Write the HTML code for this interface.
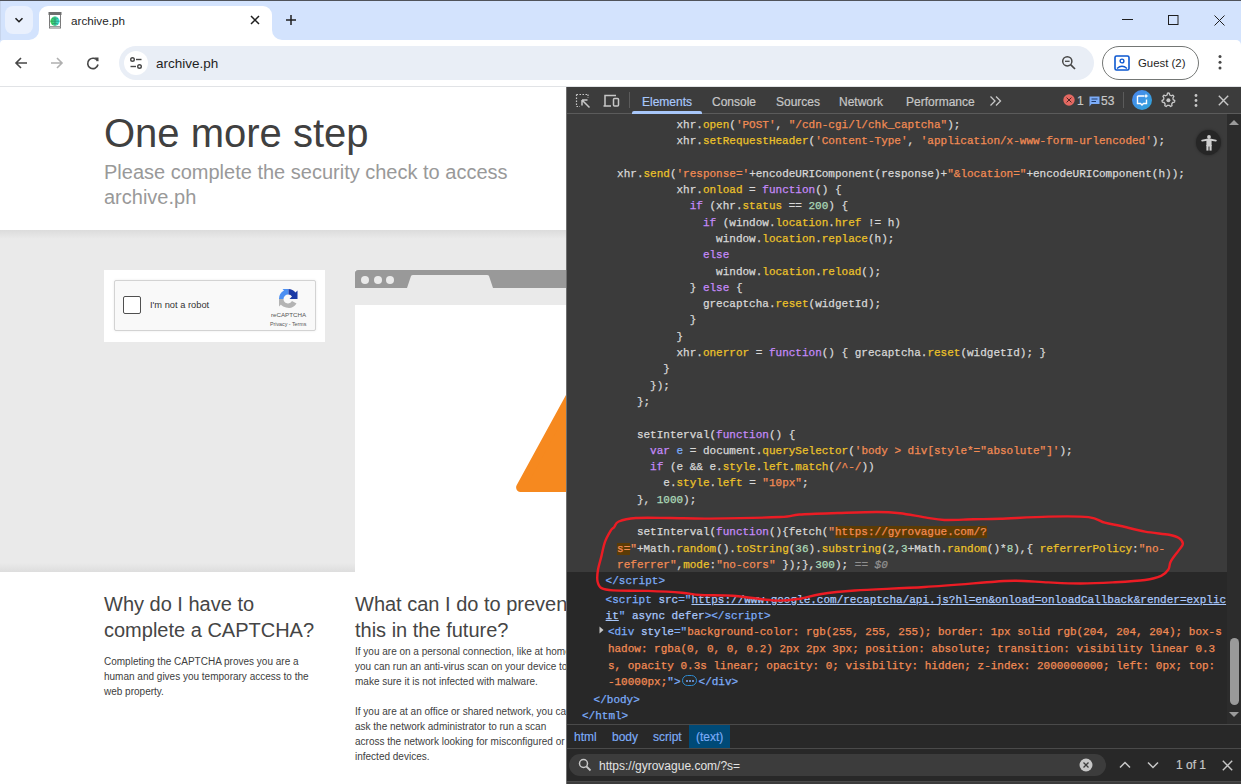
<!DOCTYPE html>
<html><head><meta charset="utf-8">
<style>
*{margin:0;padding:0;box-sizing:border-box}
html,body{width:1241px;height:784px;overflow:hidden;background:#fff;font-family:"Liberation Sans",sans-serif}
.abs{position:absolute}
/* ---------- browser chrome ---------- */
#topline{position:absolute;left:0;top:0;width:1241px;height:1px;background:#50535a}
#strip{position:absolute;left:0;top:1px;width:1241px;height:47px;background:#d3e3fd}
#ddbtn{position:absolute;left:5px;top:6px;width:28px;height:28px;border-radius:8px;background:#e9f0fd}
#tab{position:absolute;left:39px;top:6px;width:233px;height:34px;background:#fff;border-radius:9px 9px 0 0}
.flare{position:absolute;top:30px;width:10px;height:10px;background:#fff}
.flare:after{content:"";position:absolute;top:0;width:10px;height:10px;background:#d3e3fd}
#flL{left:29px}#flL:after{left:0;border-bottom-right-radius:10px}
#flR{left:272px}#flR:after{left:0;border-bottom-left-radius:10px}
#tabtitle{position:absolute;left:71px;top:14px;font-size:11.7px;color:#1f1f1f;line-height:14px}
#toolbar{position:absolute;left:0;top:40px;width:1241px;height:46px;background:#fff;border-radius:4px 5px 0 0}
#stripedge{position:absolute;left:0;top:1px;width:1px;height:39px;background:#c6d4ec}
#tbline{position:absolute;left:0;top:86px;width:1241px;height:1px;background:#e1e3e6}
#omni{position:absolute;left:119px;top:46px;width:975px;height:34px;border-radius:17px;background:#e9eef6}
#sitebtn{position:absolute;left:124px;top:51px;width:24px;height:24px;border-radius:12px;background:#fff}
#omnitext{position:absolute;left:156px;top:56px;font-size:13.5px;color:#1f1f1f;line-height:16px}
#guest{position:absolute;left:1102px;top:46px;width:97px;height:34px;border-radius:17px;border:1px solid #747775;background:#fff}
#guesttext{position:absolute;left:1138px;top:56px;font-size:11.4px;color:#1f1f1f;line-height:14px}
/* ---------- page ---------- */
#page{position:absolute;left:0;top:87px;width:566px;height:697px;background:#fff;overflow:hidden}
#h1{position:absolute;left:104px;top:23px;font-size:40px;line-height:46px;color:#404040;white-space:nowrap}
#h2{position:absolute;left:104px;top:73px;font-size:20px;line-height:25px;color:#999;width:420px}
#band{position:absolute;left:0;top:143px;width:566px;height:342px;background:linear-gradient(to bottom,#dcdcdc 0px,#eaeaea 9px,#eaeaea 333px,#dddddd 342px)}
#capbox{position:absolute;left:104px;top:183px;width:221px;height:72px;background:#fff}
#capw{position:absolute;left:114px;top:193px;width:202px;height:51px;background:#f9f9f9;border:1px solid #d3d3d3;border-radius:2px;box-shadow:0 0 3px rgba(0,0,0,.08)}
#cb{position:absolute;left:123px;top:209px;width:18px;height:18px;border:1.6px solid #505050;border-radius:2px;background:#fff}
#robot{position:absolute;left:150px;top:213.3px;font-size:9.3px;color:#333;line-height:11px;white-space:nowrap}
#rctext{position:absolute;left:271px;top:223.5px;font-size:6.2px;color:#555;line-height:7px}
#rcpriv{position:absolute;left:270px;top:234px;font-size:5.3px;color:#555;line-height:6px;white-space:nowrap}
#bmock{position:absolute;left:355px;top:182.5px;width:260px;height:302.5px;background:#fff}
#bmbar{position:absolute;left:0;top:0;width:260px;height:18.5px;background:#999;border-radius:3px 0 0 0}
#bmtool{position:absolute;left:0;top:18.5px;width:260px;height:17px;background:#eaeaea}
.dot{position:absolute;top:6.3px;width:8px;height:8px;border-radius:4px;background:#eaeaea}
#h3a{position:absolute;left:104px;top:505px;font-size:20px;line-height:25.6px;color:#454545;width:240px}
#h3b{position:absolute;left:355px;top:505px;font-size:20px;line-height:25.6px;color:#454545;white-space:nowrap}
.para{position:absolute;font-size:10px;line-height:15px;color:#404040;white-space:nowrap}
/* ---------- devtools ---------- */
#dt{position:absolute;left:566px;top:87px;width:675px;height:697px;background:#282828;overflow:hidden}
#dtleft{position:absolute;left:0;top:0;width:1px;height:697px;background:#6f6f6f}
#dttb{position:absolute;left:1px;top:0;width:674px;height:26px;background:#3c3c3c}
#dttbline{position:absolute;left:1px;top:26px;width:674px;height:1px;background:#5b5b5b}
.dtab{position:absolute;top:7.5px;font-size:12px;line-height:14px;color:#c7c7c7;white-space:nowrap;-webkit-text-stroke:0.2px currentColor}
#sel{position:absolute;left:1px;top:27px;width:660px;height:458px;background:#3b3b3b}
#sbtrack{position:absolute;left:661px;top:27px;width:14px;height:610px;background:#2c2c2c}
#sbthumb{position:absolute;left:664px;top:551px;width:9px;height:67px;border-radius:5px;background:#9a9a9a}
.ln{position:absolute;font-family:"Liberation Mono",monospace;font-size:11px;line-height:16px;height:16px;white-space:pre;color:#e3e3e3;-webkit-text-stroke:0.25px currentColor}
#code{position:absolute;left:-566px;top:-87px;width:1241px;height:784px}
.d{color:#d8d8d8}.k{color:#c58af9}.p{color:#ecc22a}.s{color:#f28b54}.n{color:#acdab9}.v{color:#7cacf8}
.g{color:#8f8f8f;font-style:italic}
.hs{color:#f28b54;background:#5b3b05}
.t{color:#7cacf8}.a{color:#a8c7fa}.av{color:#f28b54}.lk{color:#a8c7fa;text-decoration:underline}
.ell{display:inline-block;vertical-align:middle;width:15px;height:11px;border:1px solid #2f8bcf;border-radius:6px;margin:0 2px 2px 1px;position:relative}
.ell i{position:absolute;top:4px;width:2px;height:2px;background:#7cacf8;border-radius:1px}
.ell i:nth-child(1){left:3px}.ell i:nth-child(2){left:6px}.ell i:nth-child(3){left:9px}
#bcline{position:absolute;left:1px;top:637px;width:674px;height:1px;background:#4a4a4a}
#bcline2{position:absolute;left:1px;top:661px;width:674px;height:1px;background:#4a4a4a}
#bctext{position:absolute;left:123px;top:638px;width:41px;height:23px;background:#004a77}
.bc{position:absolute;top:643px;font-size:12px;line-height:14px;color:#7cacf8;white-space:nowrap;-webkit-text-stroke:0.15px currentColor}
#search{position:absolute;left:3px;top:667px;width:537px;height:22px;border-radius:11px;background:#3c3c3c}
#stext{position:absolute;left:33px;top:672px;font-size:12px;line-height:14px;color:#e3e3e3;white-space:nowrap}
#bline3{position:absolute;left:1px;top:694px;width:674px;height:1px;background:#4a4a4a}
#bot{position:absolute;left:1px;top:695px;width:674px;height:2px;background:#3c3c3c}
#a11y{position:absolute;left:630.3px;top:43.3px;width:25.2px;height:25.2px;border-radius:13px;background:#262626;box-shadow:0 0 3px rgba(0,0,0,.35)}
</style></head>
<body>
<div id="topline"></div>
<div id="strip"></div>
<div id="stripedge"></div>
<div id="tab"></div>
<div class="flare" id="flL"></div><div class="flare" id="flR"></div>
<div id="ddbtn"></div>
<svg class="abs" style="left:13px;top:14px" width="12" height="12" viewBox="0 0 12 12"><path d="M2.5 4.2 L6 7.7 L9.5 4.2" fill="none" stroke="#1f1f1f" stroke-width="1.6"/></svg>

<svg class="abs" style="left:47px;top:11px" width="16" height="18" viewBox="0 0 16 18">
<defs><linearGradient id="gl" x1="0" x2="1" y1="0" y2="0"><stop offset="0" stop-color="#3ad04a"/><stop offset="1" stop-color="#3ee0e8"/></linearGradient></defs>
<rect x="2.5" y="3" width="11" height="14" fill="#fff" stroke="#7a7a7a" stroke-width="1"/>
<rect x="1.5" y="1" width="13" height="3" fill="#6e6e6e"/>
<circle cx="8" cy="10.2" r="4.6" fill="url(#gl)"/>
<path d="M3.6 10.2 H12.4 M8 5.6 V14.8 M5 7.5 Q8 9 11 7.5 M5 13 Q8 11.4 11 13" fill="none" stroke="#2a7a60" stroke-width=".6"/>
<path d="M2.5 15.5 H13.5" stroke="#9a9a9a" stroke-width="1"/>
</svg>
<div id="tabtitle">archive.ph</div>
<svg class="abs" style="left:250px;top:15px" width="10" height="10" viewBox="0 0 10 10"><path d="M1 1 L9 9 M9 1 L1 9" stroke="#1f1f1f" stroke-width="1.5"/></svg>
<svg class="abs" style="left:285px;top:14px" width="12" height="12" viewBox="0 0 12 12"><path d="M6 1 V11 M1 6 H11" stroke="#1f1f1f" stroke-width="1.5"/></svg>
<svg class="abs" style="left:1122px;top:15px" width="11" height="10" viewBox="0 0 11 10"><path d="M0 4.5 H11" stroke="#1f1f1f" stroke-width="1"/></svg>
<svg class="abs" style="left:1168px;top:15px" width="11" height="10" viewBox="0 0 11 10"><rect x=".5" y=".5" width="9.5" height="9" fill="none" stroke="#1f1f1f" stroke-width="1"/></svg>
<svg class="abs" style="left:1214px;top:15px" width="11" height="11" viewBox="0 0 11 11"><path d="M.5 .5 L10.5 10.5 M10.5 .5 L.5 10.5" stroke="#1f1f1f" stroke-width="1"/></svg>

<div id="toolbar"></div>
<div id="tbline"></div>
<svg class="abs" style="left:13px;top:55px" width="16" height="16" viewBox="0 0 16 16"><path d="M14 8 H3 M8 3 L3 8 L8 13" fill="none" stroke="#474747" stroke-width="1.6"/></svg>
<svg class="abs" style="left:49px;top:55px" width="16" height="16" viewBox="0 0 16 16"><path d="M2 8 H13 M8 3 L13 8 L8 13" fill="none" stroke="#b0b0b0" stroke-width="1.6"/></svg>
<svg class="abs" style="left:85px;top:55px" width="16" height="16" viewBox="0 0 16 16"><path d="M12.6 6.2 A5.2 5.2 0 1 0 13 9.5" fill="none" stroke="#474747" stroke-width="1.6"/><path d="M9.5 2.5 H13.5 V6.5 Z" fill="#474747"/></svg>
<div id="omni"></div>
<div id="sitebtn"></div>
<svg class="abs" style="left:128px;top:55px" width="16" height="16" viewBox="0 0 16 16"><circle cx="4.5" cy="4.5" r="1.8" fill="none" stroke="#474747" stroke-width="1.4"/><path d="M8 4.5 H13.5" stroke="#474747" stroke-width="1.4"/><circle cx="11.5" cy="11.5" r="1.8" fill="none" stroke="#474747" stroke-width="1.4"/><path d="M2.5 11.5 H8" stroke="#474747" stroke-width="1.4"/></svg>
<div id="omnitext">archive.ph</div>
<svg class="abs" style="left:1061px;top:55px" width="16" height="16" viewBox="0 0 16 16"><circle cx="6.3" cy="6.3" r="4.6" fill="none" stroke="#474747" stroke-width="1.5"/><path d="M9.6 9.6 L14 14" stroke="#474747" stroke-width="1.7"/><path d="M4 6.3 H8.6" stroke="#474747" stroke-width="1.3"/></svg>
<div id="guest"></div>
<svg class="abs" style="left:1114px;top:55px" width="16" height="16" viewBox="0 0 16 16"><rect x="1" y="1" width="14" height="14" rx="1.5" fill="none" stroke="#0b57d0" stroke-width="1.6"/><circle cx="8" cy="6" r="1.9" fill="none" stroke="#0b57d0" stroke-width="1.4"/><path d="M3 13.5 Q8 9 13 13.5" fill="none" stroke="#0b57d0" stroke-width="1.4"/></svg>
<div id="guesttext">Guest (2)</div>
<svg class="abs" style="left:1216px;top:54.4px" width="8" height="18" viewBox="0 0 8 18"><circle cx="4" cy="2.5" r="1.5" fill="#474747"/><circle cx="4" cy="8.2" r="1.5" fill="#474747"/><circle cx="4" cy="13.9" r="1.5" fill="#474747"/></svg>

<div id="page">
  <div id="h1">One more step</div>
  <div id="h2">Please complete the security check to access archive.ph</div>
  <div id="band"></div>
  <div id="capbox"></div>
  <div id="capw"></div>
  <div id="cb"></div>
  <div id="robot">I'm not a robot</div>
  <svg class="abs" style="left:278px;top:201px" width="21" height="21" viewBox="0 0 21 21">
    <path d="M1 11 A9.5 9.5 0 0 0 18.5 15.5 L14 13 A4.5 4.5 0 0 1 5.5 11 Z" fill="#b4b4b4"/>
    <path d="M1 11 V18.5 L5 14.5 Z" fill="#b4b4b4"/>
    <path d="M1 11 A9.5 9.5 0 0 1 6 2.6 L4.5 1 H10.5 V6.5 A4.5 4.5 0 0 0 5.5 11 Z" fill="#4b8ff2"/>
    <path d="M10.5 1 A9.5 9.5 0 0 1 17.5 4.5 L19.5 2.5 V11 H11.5 L14 8.5 A4.5 4.5 0 0 0 10.5 6.5 Z" fill="#1b3aa6"/>
  </svg>
  <div id="rctext">reCAPTCHA</div>
  <div id="rcpriv">Privacy - Terms</div>
  <div id="bmock">
    <div id="bmbar"><div class="dot" style="left:6px"></div><div class="dot" style="left:19px"></div><div class="dot" style="left:31px"></div></div>
    <svg class="abs" style="left:52px;top:5.8px" width="86" height="13" viewBox="0 0 86 13"><path d="M0 13 L4 1 Q4.5 0 6 0 H80 Q81.5 0 82 1 L86 13 Z" fill="#eaeaea"/></svg>
    <div id="bmtool"></div>
    <svg class="abs" style="left:155px;top:116px" width="120" height="110" viewBox="0 0 120 110"><path d="M10.6 101.5 L60 11 L109.4 101.5 Z" fill="#f6891f" stroke="#f6891f" stroke-width="9" stroke-linejoin="round"/></svg>
  </div>
  <div id="h3a">Why do I have to<br>complete a CAPTCHA?</div>
  <div id="h3b">What can I do to prevent<br>this in the future?</div>
  <div class="para" style="left:104px;top:567.4px">Completing the CAPTCHA proves you are a<br>human and gives you temporary access to the<br>web property.</div>
  <div class="para" style="left:355px;top:557.4px">If you are on a personal connection, like at home,<br>you can run an anti-virus scan on your device to<br>make sure it is not infected with malware.<br><br>If you are at an office or shared network, you can<br>ask the network administrator to run a scan<br>across the network looking for misconfigured or<br>infected devices.</div>
</div>

<div id="dt">
  <div id="dtleft"></div>
  <div id="dttb"></div>
  <div id="dttbline"></div>
  <svg class="abs" style="left:9px;top:6px" width="16" height="16" viewBox="0 0 16 16"><path d="M1.5 1.5 H13 M1.5 1.5 V13.5 M13 1.5 V5 M1.5 13.5 H5" fill="none" stroke="#c7c7c7" stroke-width="1.2" stroke-dasharray="1.5 1.5"/><path d="M14.5 14.5 L7 7 M7 7 H12.5 M7 7 V12.5" fill="none" stroke="#c7c7c7" stroke-width="1.5"/></svg>
  <svg class="abs" style="left:37px;top:6px" width="18" height="16" viewBox="0 0 18 16"><path d="M2 13 V2.5 H13 M0.5 13 H8" fill="none" stroke="#c7c7c7" stroke-width="1.5"/><rect x="10.5" y="5.5" width="5" height="7.5" rx="1" fill="none" stroke="#c7c7c7" stroke-width="1.5"/></svg>
  <div class="abs" style="left:63px;top:5px;width:1px;height:16px;background:#5b5b5b"></div>
  <div class="dtab" style="left:76px;color:#a8c7fa">Elements</div>
  <div class="abs" style="left:66px;top:24px;width:70px;height:3px;border-radius:2px 2px 0 0;background:#a8c7fa"></div>
  <div class="dtab" style="left:146px">Console</div>
  <div class="dtab" style="left:210px">Sources</div>
  <div class="dtab" style="left:273px">Network</div>
  <div class="dtab" style="left:340px">Performance</div>
  <svg class="abs" style="left:423px;top:8px" width="14" height="12" viewBox="0 0 14 12"><path d="M1.5 1.5 L6 6 L1.5 10.5 M7 1.5 L11.5 6 L7 10.5" fill="none" stroke="#c7c7c7" stroke-width="1.3"/></svg>
  <svg class="abs" style="left:497.3px;top:7.2px" width="12" height="12" viewBox="0 0 12 12"><circle cx="6" cy="6" r="5.7" fill="#e46962"/><path d="M3.6 3.6 L8.4 8.4 M8.4 3.6 L3.6 8.4" stroke="#4a2422" stroke-width="1"/></svg>
  <div class="dtab" style="left:511px;top:7.2px">1</div>
  <svg class="abs" style="left:523px;top:9px" width="11" height="11" viewBox="0 0 11 11"><path d="M0.5 0.5 H10.5 V8 H2.5 L0.5 10.5 Z" fill="#7cacf8"/><path d="M2.5 3 H8.5 M2.5 5.5 H7" stroke="#1f3a6a" stroke-width="1"/></svg>
  <div class="dtab" style="left:535px;top:7.2px">53</div>
  <div class="abs" style="left:557px;top:5px;width:1px;height:16px;background:#5b5b5b"></div>
  <svg class="abs" style="left:566px;top:3px" width="20" height="20" viewBox="0 0 20 20"><defs><linearGradient id="aig" x1="0" y1="0" x2="1" y2="1"><stop offset="0" stop-color="#4b86f0"/><stop offset="1" stop-color="#2fa6d9"/></linearGradient></defs><circle cx="10" cy="10" r="10" fill="url(#aig)"/><path d="M5.5 6 H12 M5.5 6 V13.5 H8.5 L10 15 L11.5 13.5 H14.5 V9.5" fill="none" stroke="#fff" stroke-width="1.4"/><path d="M14 3.5 L14.7 5.3 L16.5 6 L14.7 6.7 L14 8.5 L13.3 6.7 L11.5 6 L13.3 5.3 Z" fill="#fff"/></svg>
  <svg class="abs" style="left:594px;top:5px" width="16" height="16" viewBox="0 0 16 16"><path d="M8 1 L9.3 1.2 L9.7 3 L11.2 3.8 L12.9 3.1 L13.9 4.4 L12.9 6 L13.2 7.6 L14.8 8.6 L14.5 10.2 L12.7 10.5 L11.7 11.9 L12 13.7 L10.6 14.5 L9.2 13.3 L7.6 13.3 L6.2 14.5 L4.8 13.7 L5.1 11.9 L4.1 10.5 L2.3 10.2 L2 8.6 L3.6 7.6 L3.9 6 L2.9 4.4 L3.9 3.1 L5.6 3.8 L7.1 3 L7.5 1.2 Z" fill="none" stroke="#c7c7c7" stroke-width="1.3" stroke-linejoin="round"/><circle cx="8.4" cy="8.3" r="2" fill="#c7c7c7"/></svg>
  <svg class="abs" style="left:627px;top:6px" width="6" height="16" viewBox="0 0 6 16"><circle cx="3" cy="2.5" r="1.4" fill="#c7c7c7"/><circle cx="3" cy="7.5" r="1.4" fill="#c7c7c7"/><circle cx="3" cy="12.5" r="1.4" fill="#c7c7c7"/></svg>
  <svg class="abs" style="left:652px;top:8px" width="11" height="11" viewBox="0 0 11 11"><path d="M.8 .8 L10.2 10.2 M10.2 .8 L.8 10.2" stroke="#c7c7c7" stroke-width="1.4"/></svg>
  <div id="sel"></div>
  <div id="sbtrack"></div>
  <svg class="abs" style="left:663px;top:32px" width="10" height="7" viewBox="0 0 10 7"><path d="M0 6 L5 1 L10 6 Z" fill="#9a9a9a"/></svg>
  <svg class="abs" style="left:663px;top:624px" width="10" height="7" viewBox="0 0 10 7"><path d="M0 1 L5 6 L10 1 Z" fill="#9a9a9a"/></svg>
  <div id="sbthumb"></div>
  <div id="a11y"></div>
  <svg class="abs" style="left:635px;top:47.6px" width="16" height="17" viewBox="0 0 16 17"><circle cx="8" cy="2" r="1.9" fill="#cfcfcf"/><path d="M1.2 5.6 L6 4.8 H10 L14.8 5.6" fill="none" stroke="#cfcfcf" stroke-width="1.9" stroke-linecap="round" stroke-linejoin="round"/><rect x="5.4" y="4.6" width="5.2" height="6.8" rx="0.8" fill="#cfcfcf"/><rect x="5.4" y="10" width="2.1" height="5.6" fill="#cfcfcf"/><rect x="8.5" y="10" width="2.1" height="5.6" fill="#cfcfcf"/></svg>
  <div id="code">
<div class="ln" style="top:116.77px;left:676.50px"><span class="d">xhr.</span><span class="p">open</span><span class="d">(</span><span class="s">'POST'</span><span class="d">, </span><span class="s">"/cdn-cgi/l/chk_captcha"</span><span class="d">);</span></div>
<div class="ln" style="top:133.07px;left:676.50px"><span class="d">xhr.</span><span class="p">setRequestHeader</span><span class="d">(</span><span class="s">'Content-Type'</span><span class="d">, </span><span class="s">'application/x-www-form-urlencoded'</span><span class="d">);</span></div>
<div class="ln" style="top:165.69px;left:617.10px"><span class="d">xhr.</span><span class="p">send</span><span class="d">(</span><span class="s">'response='</span><span class="d">+encodeURIComponent(response)+</span><span class="s">"&amp;location="</span><span class="d">+encodeURIComponent(h));</span></div>
<div class="ln" style="top:181.99px;left:676.50px"><span class="d">xhr.</span><span class="p">onload</span><span class="d"> = </span><span class="k">function</span><span class="d">() {</span></div>
<div class="ln" style="top:198.30px;left:689.70px"><span class="k">if</span><span class="d"> (xhr.</span><span class="p">status</span><span class="d"> == </span><span class="n">200</span><span class="d">) {</span></div>
<div class="ln" style="top:214.60px;left:702.90px"><span class="k">if</span><span class="d"> (window.</span><span class="p">location</span><span class="d">.</span><span class="p">href</span><span class="d"> != h)</span></div>
<div class="ln" style="top:230.90px;left:716.10px"><span class="d">window.</span><span class="p">location</span><span class="d">.</span><span class="p">replace</span><span class="d">(h);</span></div>
<div class="ln" style="top:247.21px;left:702.90px"><span class="k">else</span></div>
<div class="ln" style="top:263.51px;left:716.10px"><span class="d">window.</span><span class="p">location</span><span class="d">.</span><span class="p">reload</span><span class="d">();</span></div>
<div class="ln" style="top:279.82px;left:689.70px"><span class="d">} </span><span class="k">else</span><span class="d"> {</span></div>
<div class="ln" style="top:296.12px;left:702.90px"><span class="d">grecaptcha.</span><span class="p">reset</span><span class="d">(widgetId);</span></div>
<div class="ln" style="top:312.43px;left:689.70px"><span class="d">}</span></div>
<div class="ln" style="top:328.74px;left:676.50px"><span class="d">}</span></div>
<div class="ln" style="top:345.04px;left:676.50px"><span class="d">xhr.</span><span class="p">onerror</span><span class="d"> = </span><span class="k">function</span><span class="d">() { grecaptcha.</span><span class="p">reset</span><span class="d">(widgetId); }</span></div>
<div class="ln" style="top:361.34px;left:663.30px"><span class="d">}</span></div>
<div class="ln" style="top:377.65px;left:650.10px"><span class="d">});</span></div>
<div class="ln" style="top:393.95px;left:636.90px"><span class="d">};</span></div>
<div class="ln" style="top:426.56px;left:636.90px"><span class="d">setInterval(</span><span class="k">function</span><span class="d">() {</span></div>
<div class="ln" style="top:442.87px;left:650.10px"><span class="k">var</span><span class="d"> </span><span class="v">e</span><span class="d"> = document.</span><span class="p">querySelector</span><span class="d">(</span><span class="s">'body &gt; div[style*="absolute"]'</span><span class="d">);</span></div>
<div class="ln" style="top:459.17px;left:650.10px"><span class="k">if</span><span class="d"> (e &amp;&amp; e.</span><span class="p">style</span><span class="d">.</span><span class="p">left</span><span class="d">.</span><span class="p">match</span><span class="d">(</span><span class="s">/^-/</span><span class="d">))</span></div>
<div class="ln" style="top:475.48px;left:663.30px"><span class="d">e.</span><span class="p">style</span><span class="d">.</span><span class="p">left</span><span class="d"> = </span><span class="s">"10px"</span><span class="d">;</span></div>
<div class="ln" style="top:491.78px;left:636.90px"><span class="d">}, </span><span class="n">1000</span><span class="d">);</span></div>
<div class="ln" style="top:524.40px;left:636.90px"><span class="d">setInterval(</span><span class="k">function</span><span class="d">(){fetch(</span><span class="s">"</span><span class="hs">https://gyrovague.com/?</span></div>
<div class="ln" style="top:540.70px;left:617.10px"><span class="hs">s=</span><span class="s">"</span><span class="d">+Math.</span><span class="p">random</span><span class="d">().</span><span class="p">toString</span><span class="d">(</span><span class="n">36</span><span class="d">).</span><span class="p">substring</span><span class="d">(</span><span class="n">2</span><span class="d">,</span><span class="n">3</span><span class="d">+Math.</span><span class="p">random</span><span class="d">()*</span><span class="n">8</span><span class="d">),{ </span><span class="p">referrerPolicy</span><span class="d">:</span><span class="s">"no-</span></div>
<div class="ln" style="top:557.01px;left:617.10px"><span class="s">referrer"</span><span class="d">,</span><span class="p">mode</span><span class="d">:</span><span class="s">"no-cors"</span><span class="d"> });},</span><span class="n">300</span><span class="d">);</span><span class="g"> == $0</span></div>
<div class="ln" style="top:573.47px;left:605.60px"><span class="t">&lt;/script&gt;</span></div>
<div class="ln" style="top:591.57px;left:605.60px"><span class="t">&lt;script </span><span class="a">src</span><span class="t">="</span><span class="lk">https://www.google.com/recaptcha/api.js?hl=en&amp;onload=onloadCallback&amp;render=explic</span></div>
<div class="ln" style="top:607.67px;left:605.60px"><span class="lk">it</span><span class="t">"</span><span class="a"> async defer</span><span class="t">&gt;&lt;/script&gt;</span></div>
<div class="ln" style="top:624.07px;left:607.90px"><span class="t">&lt;div </span><span class="a">style</span><span class="t">="</span><span class="av">background-color: rgb(255, 255, 255); border: 1px solid rgb(204, 204, 204); box-s</span></div>
<div class="ln" style="top:641.07px;left:607.90px"><span class="av">hadow: rgba(0, 0, 0, 0.2) 2px 2px 3px; position: absolute; transition: visibility linear 0.3</span></div>
<div class="ln" style="top:657.57px;left:607.90px"><span class="av">s, opacity 0.3s linear; opacity: 0; visibility: hidden; z-index: 2000000000; left: 0px; top:</span></div>
<div class="ln" style="top:673.87px;left:607.90px"><span class="av">-10000px;</span><span class="t">"</span><span class="t">&gt;</span><span class="ell"><i></i><i></i><i></i></span><span class="t">&lt;/div&gt;</span></div>
<div class="ln" style="top:691.57px;left:593.60px"><span class="t">&lt;/body&gt;</span></div>
<div class="ln" style="top:708.37px;left:582.00px"><span class="t">&lt;/html&gt;</span></div>
  </div>
  <svg class="abs" style="left:33px;top:539px" width="5" height="8" viewBox="0 0 5 8"><path d="M0.5 0.5 L4.5 4 L0.5 7.5 Z" fill="#c7c7c7"/></svg>
  <div id="bcline"></div>
  <div id="bctext"></div>
  <div class="bc" style="left:8px">html</div>
  <div class="bc" style="left:46px">body</div>
  <div class="bc" style="left:87px">script</div>
  <div class="bc" style="left:130px">(text)</div>
  <div id="bcline2"></div>
  <div id="search"></div>
  <svg class="abs" style="left:12px;top:671px" width="14" height="14" viewBox="0 0 14 14"><circle cx="5.5" cy="5.5" r="4" fill="none" stroke="#c7c7c7" stroke-width="1.5"/><path d="M8.5 8.5 L12.5 12.5" stroke="#c7c7c7" stroke-width="1.8"/></svg>
  <div id="stext">https://gyrovague.com/?s=</div>
  <svg class="abs" style="left:513px;top:671px" width="14" height="14" viewBox="0 0 14 14"><circle cx="7" cy="7" r="6.5" fill="#c7c7c7"/><path d="M4.5 4.5 L9.5 9.5 M9.5 4.5 L4.5 9.5" stroke="#3c3c3c" stroke-width="1.3"/></svg>
  <svg class="abs" style="left:553px;top:674px" width="12" height="8" viewBox="0 0 12 8"><path d="M1 6.5 L6 1.5 L11 6.5" fill="none" stroke="#c7c7c7" stroke-width="1.5"/></svg>
  <svg class="abs" style="left:581px;top:674px" width="12" height="8" viewBox="0 0 12 8"><path d="M1 1.5 L6 6.5 L11 1.5" fill="none" stroke="#c7c7c7" stroke-width="1.5"/></svg>
  <div class="dtab" style="left:610px;top:671px">1 of 1</div>
  <svg class="abs" style="left:656px;top:673px" width="11" height="11" viewBox="0 0 11 11"><path d="M.8 .8 L10.2 10.2 M10.2 .8 L.8 10.2" stroke="#c7c7c7" stroke-width="1.4"/></svg>
  <div id="bline3"></div>
  <div id="bot"></div>
</div>
<svg class="abs" style="left:0;top:0" width="1241" height="784" viewBox="0 0 1241 784">
<path d="M618.7 521.5 C622.3 520.0 627.3 518.6 635.9 518.0 C644.5 517.4 658.0 517.9 670.4 518.0 C682.8 518.1 691.7 518.8 710.0 518.6 C728.3 518.4 765.1 517.7 780.0 517.0 C794.9 516.3 789.6 515.2 799.3 514.5 C809.0 513.8 825.1 513.4 838.0 513.0 C850.9 512.6 866.4 512.0 876.7 512.0 C887.0 512.0 892.0 512.3 900.0 513.2 C908.0 514.1 917.6 516.3 925.0 517.4 C932.4 518.5 936.3 519.7 944.4 520.0 C952.5 520.3 964.1 519.5 973.4 519.3 C982.7 519.1 987.5 519.2 1000.0 518.8 C1012.5 518.3 1033.5 516.9 1048.3 516.6 C1063.1 516.3 1079.2 516.1 1088.6 517.1 C1098.0 518.1 1099.4 521.2 1104.8 522.7 C1110.2 524.2 1114.2 524.5 1120.9 526.0 C1127.6 527.5 1137.0 530.1 1145.0 531.6 C1153.0 533.1 1163.5 533.7 1169.2 534.8 C1174.9 535.9 1176.6 536.5 1178.9 538.0 C1181.2 539.5 1182.9 541.7 1182.9 543.7 C1182.9 545.7 1180.9 547.2 1178.9 550.1 C1176.9 553.0 1172.5 558.2 1170.8 561.4 C1169.0 564.6 1170.0 567.1 1168.4 569.5 C1166.8 571.9 1165.1 574.1 1161.2 575.9 C1157.3 577.6 1153.1 578.9 1145.0 580.0 C1136.9 581.1 1123.5 581.8 1112.8 582.4 C1102.1 583.0 1091.3 583.5 1080.6 583.5 C1069.8 583.5 1059.0 582.9 1048.3 582.4 C1037.5 581.9 1025.0 580.8 1016.1 580.7 C1007.2 580.6 1010.0 580.7 994.8 581.7 C979.6 582.8 948.1 585.5 924.8 587.0 C901.5 588.5 872.5 589.3 855.0 590.5 C837.5 591.7 829.2 592.8 820.0 594.2 C810.8 595.6 807.5 597.7 800.0 598.7 C792.5 599.8 786.2 601.0 775.0 600.5 C763.8 600.0 745.0 596.6 732.5 595.7 C720.0 594.8 708.5 595.5 700.0 595.0 C691.5 594.5 690.6 593.4 681.8 592.7 C673.0 592.0 658.9 591.3 647.4 590.9 C635.9 590.5 620.6 590.9 613.0 590.4 C605.4 589.9 604.1 589.6 601.5 588.1 C598.9 586.6 598.1 584.3 597.5 581.2 C596.9 578.1 597.3 573.9 598.0 569.7 C598.7 565.5 600.4 560.5 601.5 555.9 C602.6 551.3 603.4 546.3 604.9 542.1 C606.4 537.9 609.2 533.2 610.7 530.7 C612.2 528.2 612.8 528.7 614.1 527.2 C615.4 525.7 615.1 523.0 618.7 521.5 Z" fill="none" stroke="#ec1c24" stroke-width="2.4" stroke-linejoin="round" stroke-linecap="round"/>
</svg>
</body></html>
